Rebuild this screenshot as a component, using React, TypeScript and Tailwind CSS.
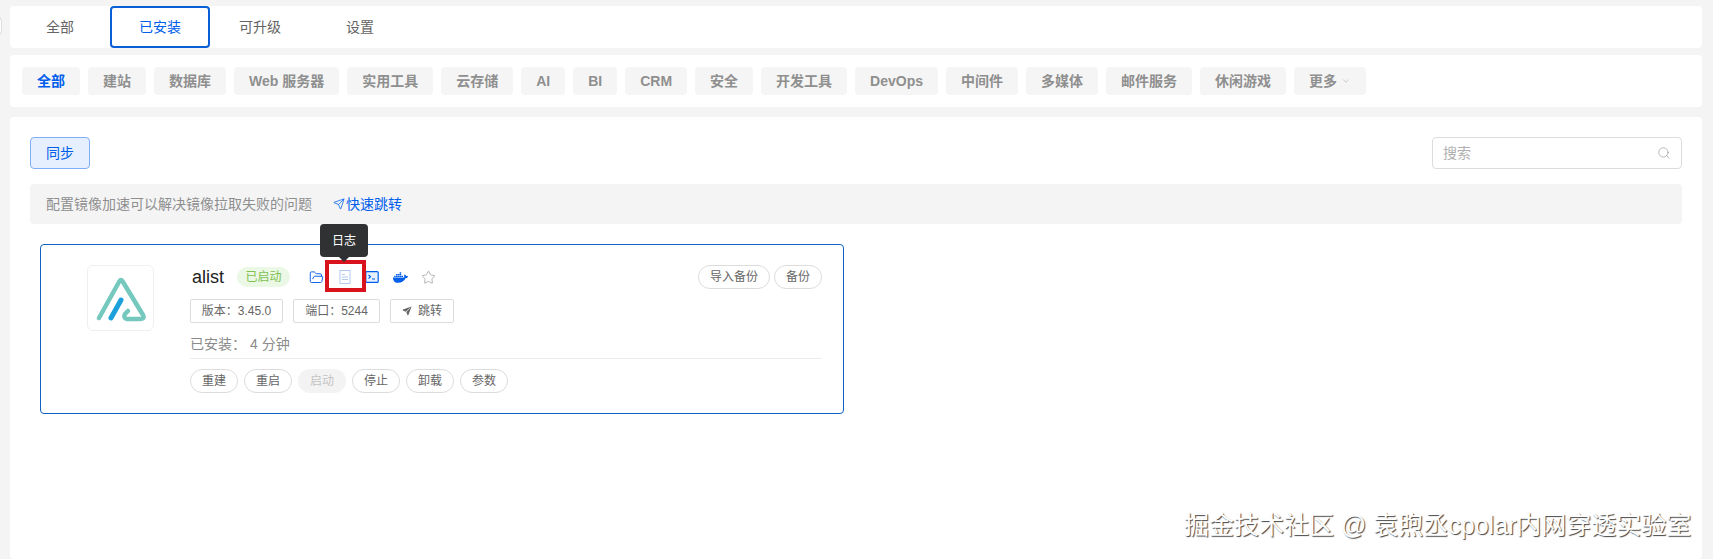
import { FaDocker } from "react-icons/fa";
import { IoPaperPlane } from "react-icons/io5";
import { ChevronDown, FolderOpen, Search, Send, Star } from "lucide-react";

const tabs = ["全部", "已安装", "可升级", "设置"];
const filters = ["全部", "建站", "数据库", "Web 服务器", "实用工具", "云存储", "AI", "BI", "CRM", "安全", "开发工具", "DevOps", "中间件", "多媒体", "邮件服务", "休闲游戏"];
const actions = ["重建", "重启", "启动", "停止", "卸载", "参数"];

function AppLogo() {
  return (
    <svg viewBox="0 0 66 66" className="h-[66px] w-[66px]" fill="none" strokeLinecap="round" strokeLinejoin="round">
      <path d="M11 52 L31 16 Q33 12 35 16 L55 49 Q57 53 52 53 L39 53 Q35 52 37 48 L40 45" stroke="#74c8bd" strokeWidth="4.5" />
      <path d="M33 34 L23 52" stroke="#1ba0dc" strokeWidth="5" />
    </svg>
  );
}

function LogIcon() {
  return (
    <svg viewBox="0 0 12 14" className="h-[14px] w-[12px]" fill="none" stroke="#9dbdf0" strokeWidth="0.8">
      <rect x="1" y="0.5" width="10" height="13" />
      <path d="M3 4.5h3M3 7h6M3 9.5h6" />
    </svg>
  );
}

function TerminalIcon() {
  return (
    <svg viewBox="0 0 14 14" className="h-[14px] w-[14px]" fill="#e8f0fd" stroke="#005eeb" strokeWidth="1.2">
      <rect x="0.8" y="1.6" width="12.4" height="10.8" rx="1" />
      <path d="M3.5 5l2 1.8-2 1.8M7 9h3" fill="none" />
    </svg>
  );
}

function IconSlot({ children }: { children: React.ReactNode }) {
  return <span className="flex w-[28px] justify-center">{children}</span>;
}

function Pill({ label, disabled }: { label: string; disabled?: boolean }) {
  return (
    <button
      className={
        disabled
          ? "h-6 w-12 rounded-full bg-[#f3f3f3] text-xs text-[#c4c4c4]"
          : "h-6 rounded-full border border-[#dcdcdc] bg-white px-[11px] text-xs text-[#666]"
      }
    >
      {label}
    </button>
  );
}

export default function App() {
  return (
    <div className="relative flex h-[559px] flex-col overflow-hidden bg-[#f4f4f5] pt-[6px] pr-[11px] pl-[10px] font-['Liberation_Sans','Noto_Sans_CJK_SC',sans-serif]">
      <div className="absolute top-[14px] left-[-14px] h-6 w-4 rounded-full border border-[#dcdcdc] bg-white" />

      <div className="flex h-[42px] rounded-[4px] bg-white">
        {tabs.map((tab) => (
          <button
            key={tab}
            className={
              tab === "已安装"
                ? "w-[100px] rounded-[4px] border-2 border-[#0a5fd6] text-sm text-[#005eeb]"
                : "w-[100px] text-sm text-[#646464]"
            }
          >
            {tab}
          </button>
        ))}
      </div>

      <div className="mt-[7px] flex h-[52px] items-center gap-2 rounded-[4px] bg-white px-3">
        {filters.map((item, i) => (
          <button
            key={item}
            className={
              i === 0
                ? "h-[28px] rounded-[4px] bg-[#f5f5f5] px-[15px] text-sm font-bold text-[#005eeb]"
                : "h-[28px] rounded-[4px] bg-[#f5f5f5] px-[15px] text-sm font-bold text-[#8f8f8f]"
            }
          >
            {item}
          </button>
        ))}
        <button className="flex h-[28px] items-center gap-1 rounded-[4px] bg-[#f5f5f5] px-[15px] text-sm font-bold text-[#8f8f8f]">
          更多
          <ChevronDown className="h-[10px] w-[10px]" strokeWidth={1} />
        </button>
      </div>

      <div className="mt-[10px] flex-1 rounded-[4px] bg-white px-5 pt-5">
        <div className="flex items-center justify-between">
          <button className="h-8 w-[60px] rounded-[4px] border border-[#80aef5] bg-[#e5effd] text-sm text-[#005eeb]">同步</button>
          <div className="flex h-8 w-[250px] items-center justify-between rounded-[4px] border border-[#dcdcdc] px-[10px]">
            <span className="text-sm text-[#b0b0b0]">搜索</span>
            <Search className="h-[14px] w-[14px] text-[#8a8a8a]" strokeWidth={1} />
          </div>
        </div>

        <div className="mt-[15px] flex h-10 items-center rounded-[4px] bg-[#f4f4f5] px-4 text-sm">
          <span className="text-[#8f8f8f]">配置镜像加速可以解决镜像拉取失败的问题</span>
          <Send className="ml-[21px] h-3 w-3 text-[#005eeb]" strokeWidth={1.5} />
          <span className="ml-px text-[#005eeb]">快速跳转</span>
        </div>

        <div className="relative mt-5 ml-[10px] flex h-[170px] w-[804px] rounded-[4px] border border-[#0f62c2] pt-[20px] pr-[21px]">
          <div className="ml-[46px] h-[66px] w-[67px] rounded-[6px] border border-[#efefef]">
            <AppLogo />
          </div>

          <div className="ml-[36px] flex-1">
            <div className="flex h-6 items-center justify-between">
              <div className="flex items-center">
                <span className="ml-[2px] text-lg text-[#222]">alist</span>
                <span className="ml-[13px] flex h-[20px] w-[53px] items-center justify-center rounded-full bg-[#ecf8e6] text-xs text-[#7ec050]">已启动</span>
                <div className="ml-3 flex items-center">
                  <IconSlot>
                    <FolderOpen className="h-[15px] w-[15px] text-[#005eeb]" strokeWidth={1.5} />
                  </IconSlot>
                  <IconSlot>
                    <span className="ml-[2px] flex">
                      <LogIcon />
                    </span>
                  </IconSlot>
                  <IconSlot>
                    <TerminalIcon />
                  </IconSlot>
                  <IconSlot>
                    <FaDocker className="h-[15px] w-[15px] text-[#005eeb]" />
                  </IconSlot>
                  <IconSlot>
                    <Star className="h-[15px] w-[15px] text-[#8a8a8a]" strokeWidth={1} />
                  </IconSlot>
                </div>
              </div>
              <div className="flex gap-1">
                <Pill label="导入备份" />
                <Pill label="备份" />
              </div>
            </div>

            <div className="mt-[10px] flex gap-[10px]">
              <span className="flex h-6 w-[93px] items-center justify-center rounded-[2px] border border-[#dcdcdc] text-xs text-[#666]">版本：3.45.0</span>
              <span className="flex h-6 w-[87px] items-center justify-center rounded-[2px] border border-[#dcdcdc] text-xs text-[#666]">端口：5244</span>
              <span className="flex h-6 w-[64px] items-center justify-center gap-[6px] rounded-[2px] border border-[#dcdcdc] text-xs text-[#666]">
                <IoPaperPlane className="h-[10px] w-[10px]" />
                跳转
              </span>
            </div>

            <div className="mt-[11px] h-[25px] border-b border-[#ececec] text-sm leading-[20px] text-[#8a8a8a]">
              已安装：<span className="ml-[4px]">4 分钟</span>
            </div>

            <div className="mt-[10px] flex gap-[6px]">
              {actions.map((a) => (
                <Pill key={a} label={a} disabled={a === "启动"} />
              ))}
            </div>
          </div>

          <div className="absolute top-[15px] left-[284px] h-[32px] w-[41px] border-[4px] border-[#d8131c]" />
          <div className="absolute top-[-21px] left-[279px] flex h-[33px] w-12 items-center justify-center rounded-[4px] bg-[#303133] text-xs text-white">
            日志
            <span className="absolute bottom-[-5px] left-1/2 h-0 w-0 -translate-x-1/2 border-x-[5px] border-t-[5px] border-x-transparent border-t-[#303133]" />
          </div>
        </div>
      </div>

      <div className="absolute top-[510px] left-[1184px] text-[25px] leading-[30px] whitespace-nowrap text-white [text-shadow:1px_1px_1px_#444]">掘金技术社区 @ 袁煦丞cpolar内网穿透实验室</div>
    </div>
  );
}
